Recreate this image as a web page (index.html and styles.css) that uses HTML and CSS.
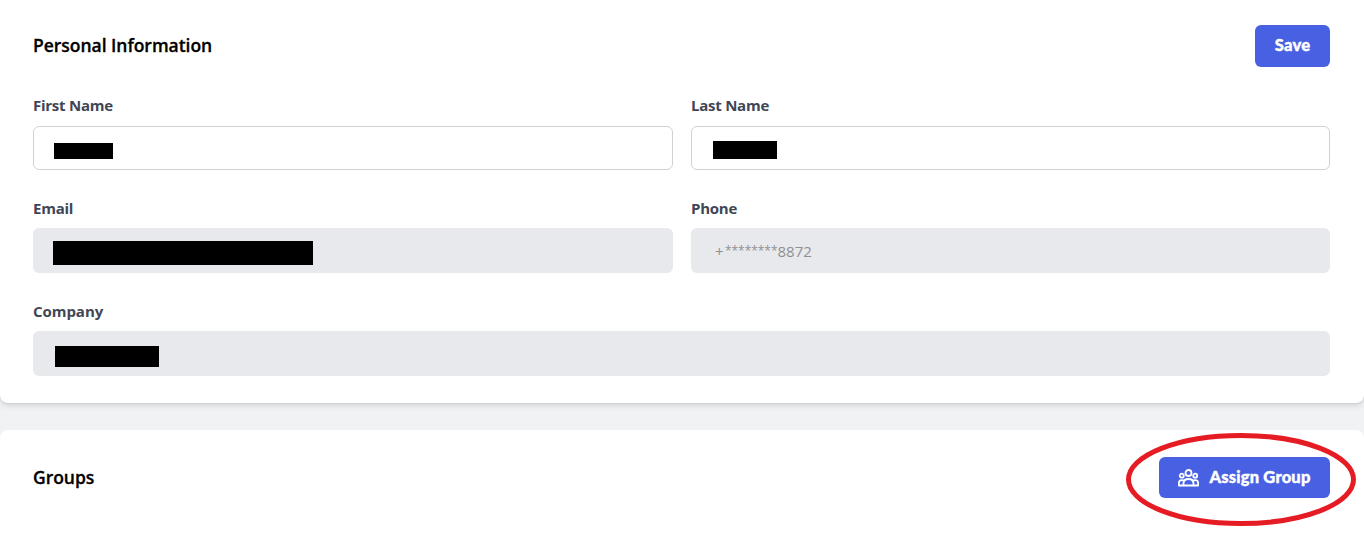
FILE: index.html
```html
<!DOCTYPE html>
<html lang="en">
<head>
<meta charset="utf-8">
<title>Personal Information</title>
<link rel="stylesheet" href="styles.css">
</head>
<body>
<main class="page">
  <section class="card card-info">
    <header class="card-header">
      <h2 class="card-title title-info">Personal Information</h2>
      <button class="btn btn-save" type="button">Save</button>
    </header>
    <div class="form">
      <div class="field">
        <span class="label label-first">First Name</span>
        <div class="input"><span class="redacted redacted-first"></span></div>
      </div>
      <div class="field">
        <span class="label">Last Name</span>
        <div class="input"><span class="redacted redacted-last"></span></div>
      </div>
      <div class="field">
        <span class="label">Email</span>
        <div class="input input-disabled"><span class="redacted redacted-email"></span></div>
      </div>
      <div class="field">
        <span class="label">Phone</span>
        <div class="input input-disabled"><span class="phone"><span class="plus">+</span><span class="stars">********</span><span>8872</span></span></div>
      </div>
      <div class="field field-wide">
        <span class="label label-company">Company</span>
        <div class="input input-disabled"><span class="redacted redacted-company"></span></div>
      </div>
    </div>
  </section>
  <section class="card card-groups">
    <header class="card-header">
      <h2 class="card-title title-groups">Groups</h2>
      <button class="btn btn-assign" type="button">
        <svg class="icon" viewBox="0 0 21 18" fill="none" stroke="currentColor" stroke-width="1.8" stroke-linejoin="round">
          <circle cx="10.500" cy="4" r="3"/>
          <circle cx="3.800" cy="6.700" r="2"/>
          <circle cx="17.200" cy="6.700" r="2"/>
          <path d="M5.500 16.500v-2.100c0-2.600 2-4.400 5-4.400s5 1.800 5 4.400v2.100z"/>
          <path d="M6.200 11.700c-.7-.5-1.400-.6-2.400-.6-1.800 0-2.900 1.200-2.900 3v2.400h4.600M14.800 11.700c.7-.5 1.400-.6 2.400-.6 1.800 0 2.900 1.200 2.900 3v2.400h-4.600"/>
        </svg>
        <span class="assign-text">Assign Group</span>
      </button>
    </header>
  </section>
  <svg class="highlight" viewBox="0 0 232 96" fill="none" stroke="#e51c23" stroke-width="5">
    <ellipse cx="116" cy="48.500" rx="112.500" ry="44"/>
  </svg>
</main>
</body>
</html>
```
FILE: styles.css
```css
* { box-sizing: border-box; }
body {
  margin: 0;
  background: #f1f2f4;
  font-family: "Open Sans", "Noto Sans", sans-serif;
}
.page {
  position: relative;
  display: flex;
  flex-direction: column;
  gap: 27px;
  height: 534px;
  overflow: hidden;
}
.card { background: #fff; padding: 0 34px 0 33px; }
.card-info {
  height: 403px;
  padding-top: 25px;
  border-radius: 0 0 8px 8px;
  box-shadow: 0 3px 6px rgba(0, 0, 0, .1), 0 1px 2px rgba(0, 0, 0, .08);
}
.card-groups {
  flex: 1;
  padding-top: 27px;
  border-radius: 8px 8px 0 0;
}
.card-header {
  display: flex;
  justify-content: space-between;
  align-items: center;
  height: 42px;
}
.card-groups .card-header { height: 41px; }
.card-title {
  margin: 0;
  padding-bottom: 2px;
  font-size: 17.5px;
  line-height: 24px;
  font-weight: 600;
  letter-spacing: -0.03px;
  -webkit-text-stroke: 0.3px #000;
  color: #000;
}
.title-groups { padding-bottom: 1px; }
.btn {
  display: flex;
  align-items: center;
  justify-content: center;
  border: 0;
  padding: 0 0 2px;
  border-radius: 6px;
  background: #4861e2;
  color: #fff;
  font: 900 16.500px/24px Lato, "Open Sans", sans-serif;
  letter-spacing: 0.2px;
  -webkit-text-stroke: 0.4px #fff;
}
.btn-save { width: 75px; height: 42px; }
.btn-assign { width: 171px; height: 41px; gap: 10px; padding-bottom: 1px; }
.icon { width: 21px; height: 18px; margin-top: 2px; }
.form {
  display: grid;
  grid-template-columns: 640px 639px;
  column-gap: 18px;
  row-gap: 14px;
  margin-top: 26px;
}
.field { display: flex; flex-direction: column; height: 89px; }
.field-wide { grid-column: 1 / -1; }
.label {
  align-self: flex-start;
  font-size: 15px;
  line-height: 24px;
  height: 33px;
  font-weight: 700;
  letter-spacing: -0.25px;
  color: #3f4656;
}
.label-company { letter-spacing: -0.05px; }
.input {
  display: flex;
  align-items: flex-start;
  height: 44px;
  border: 1px solid #d2d2d4;
  border-radius: 6px;
}
.input-disabled {
  height: 45px;
  margin-top: -1px;
  border: 0;
  background: #e8e9ed;
}
.redacted { background: #000; }
.redacted-first { width: 59px; height: 16px; margin: 16px 0 0 20px; }
.redacted-last { width: 64px; height: 18px; margin: 14px 0 0 21px; }
.redacted-email { width: 260px; height: 24px; margin: 13px 0 0 20px; }
.redacted-company { width: 104px; height: 21px; margin: 15px 0 0 22px; }
.phone {
  display: flex;
  margin: 11px 0 0 24px;
  font-size: 15px;
  line-height: 24px;
  color: #8f9094;
}
.plus { width: 10px; }
.stars {
  width: 52.500px;
  font-size: 12px;
  line-height: 24px;
  letter-spacing: -0.050px;
}
.highlight {
  position: absolute;
  left: 1125px;
  top: 431px;
  width: 232px;
  height: 96px;
}
```
